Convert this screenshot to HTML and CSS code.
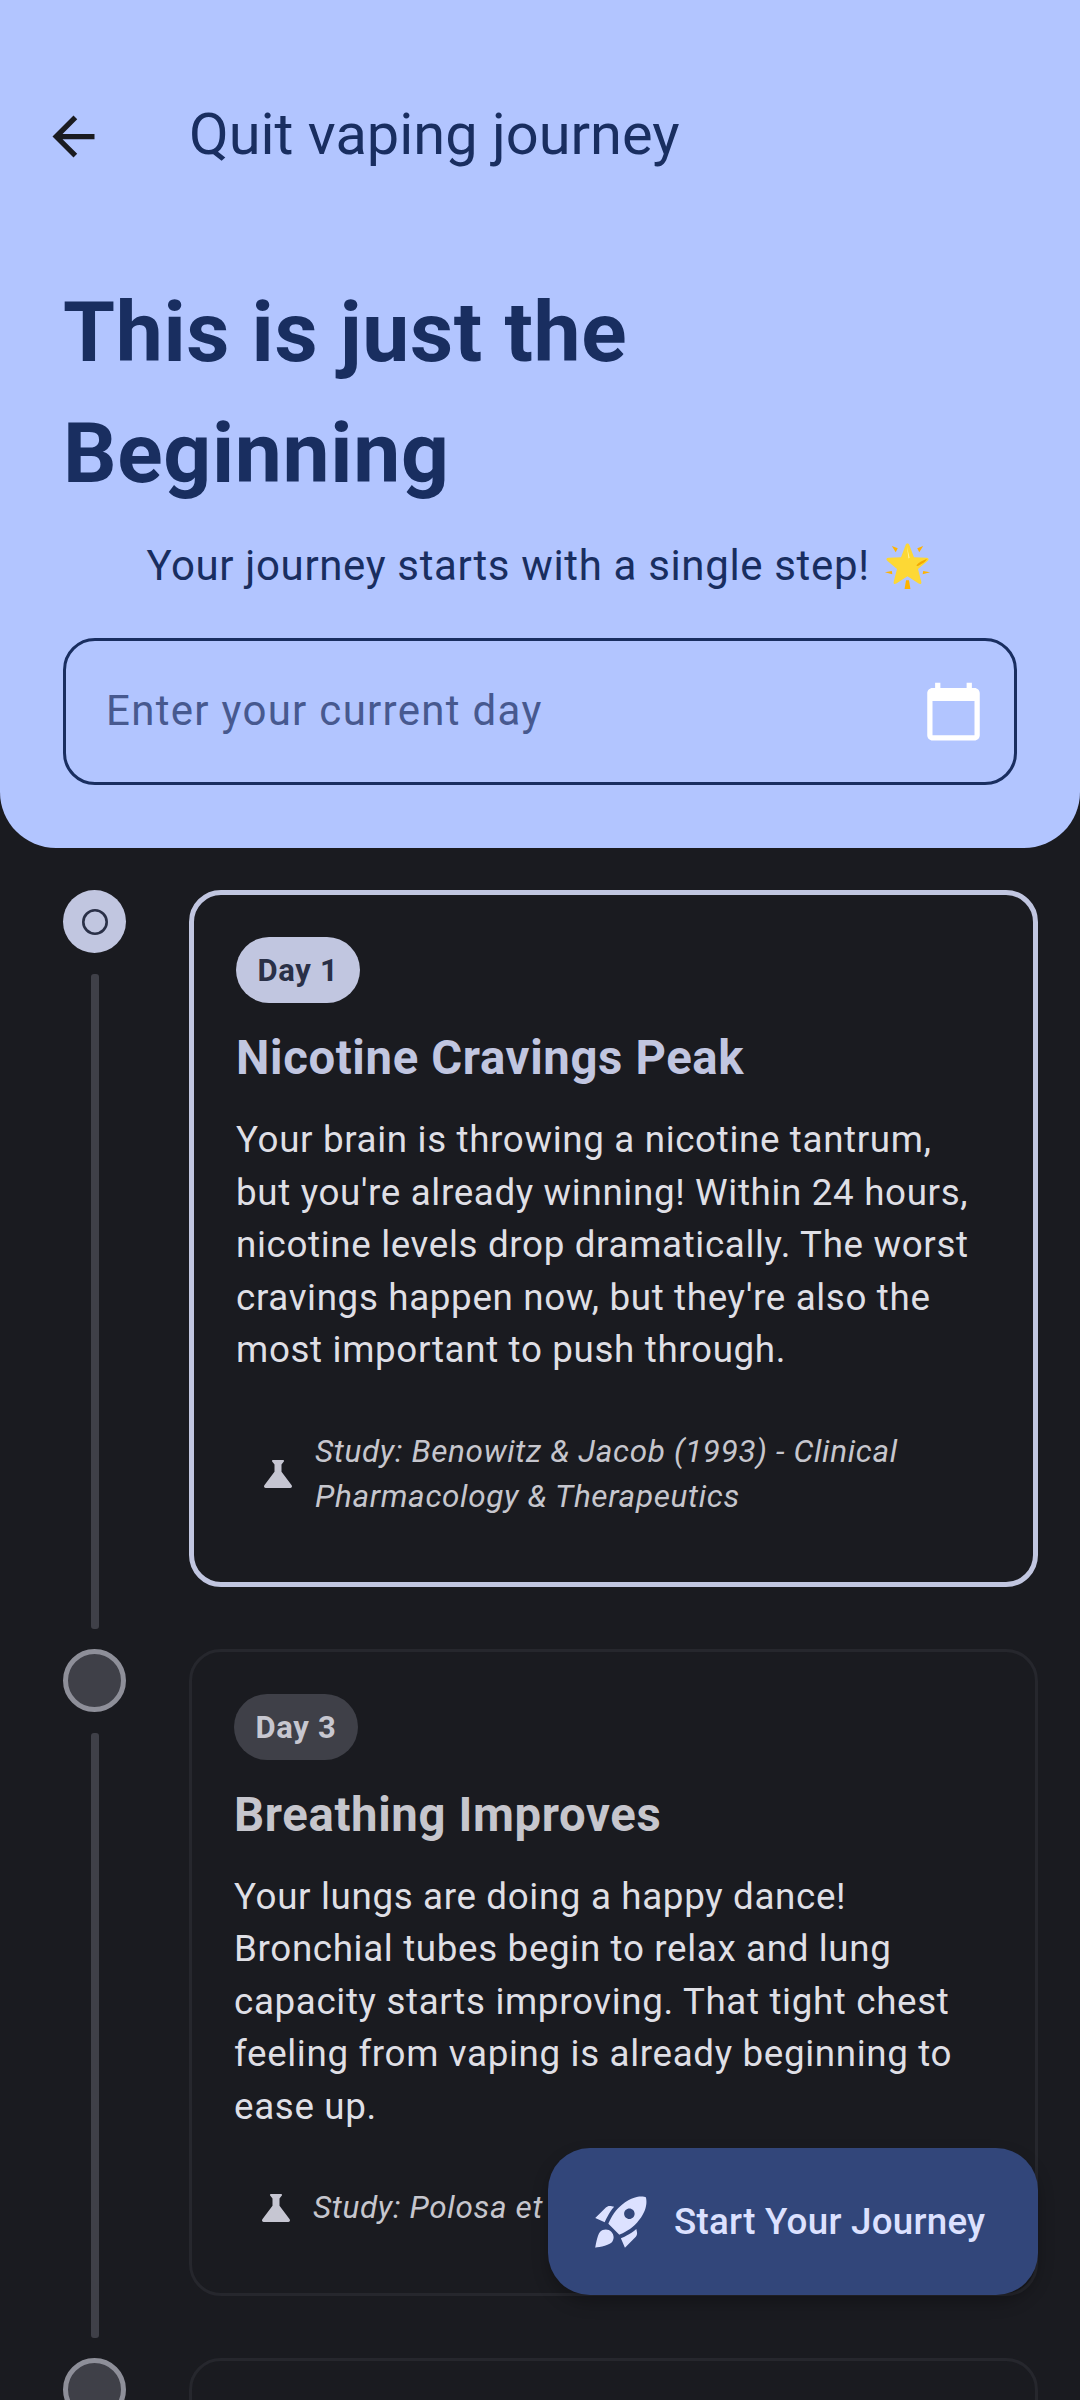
FILE: index.html
```html
<!DOCTYPE html>
<html lang="en">
<head>
    <meta charset="UTF-8">
    <title>Quit vaping journey</title>
    <link rel="stylesheet" href="styles.css">
</head>
<body>
<div id="screen">
    <header id="hero">
        <div id="appbar">
            <svg class="back" viewBox="0 0 24 24"><path d="M20 11H7.830l5.590-5.590L12 4l-8 8 8 8 1.410-1.410L7.830 13H20v-2z"/></svg>
            <span class="appbar-title">Quit vaping journey</span>
        </div>
        <h1>This is just the Beginning</h1>
        <p class="subtitle">Your journey starts with a single step!
            <svg class="star" viewBox="0 0 48 48">
                <path d="M24 1.500c1 0 1.600.7 2 1.800l4.600 12.200 12.700.7c2.300.1 3 1.600 1.400 3l-10 8.300 3.400 13c.5 2-.9 3-2.700 1.900L24 35l-11.400 7.400c-1.800 1.100-3.200.1-2.700-1.900l3.400-13-10-8.300c-1.600-1.400-.9-2.900 1.400-3l12.700-.7L22 3.300c.4-1.100 1-1.800 2-1.800z" fill="#fdd835"/>
                <path d="M23.500 5l2.500 10.500-1 1.500z" fill="#fff59d"/>
                <path d="M33 24c2-3 6-5 11-7-1 2-3 4-6 5.500-2 1.500-3.500 2.500-5 1.500z" fill="#f4a800"/>
                <path d="M8 4l6 2.500-2 4zM40 4l-6 2.500 2 4zM1 31l7-1.500.5 3.500zM47 31l-7-1.500-.5 3.500zM22.500 39h3l1.500 9h-6z" fill="#ffb300"/>
            </svg>
        </p>
        <div id="dayInput">
            <span class="placeholder">Enter your current day</span>
            <svg class="calendar" viewBox="0 0 24 24"><path d="M20 3h-1V1h-2v2H7V1H5v2H4c-1.100 0-2 .9-2 2v16c0 1.100.9 2 2 2h16c1.100 0 2-.9 2-2V5c0-1.100-.9-2-2-2zm0 18H4V8h16v13z"/></svg>
        </div>
    </header>

    <main id="timeline">
        <div class="step current">
            <div class="rail">
                <div class="node">
                    <svg class="node-ring" viewBox="0 0 26 26"><circle cx="13" cy="13" r="11.700"/></svg>
                </div>
                <div class="line"></div>
            </div>
            <article class="card">
                <span class="pill">Day 1</span>
                <h2>Nicotine Cravings Peak</h2>
                <p class="body">Your brain is throwing a nicotine tantrum, but you're already winning! Within 24 hours, nicotine levels drop dramatically. The worst cravings happen now, but they're also the most important to push through.</p>
                <div class="study">
                    <svg class="flask" viewBox="0 0 24 24"><path d="M19.800 18.400L14 10.670V6.500l1.350-1.690c.26-.33.03-.81-.39-.81H9.040c-.42 0-.65.48-.39.81L10 6.500v4.170L4.200 18.400c-.49.66-.02 1.600.8 1.600h14c.82 0 1.290-.94.8-1.600z"/></svg>
                    <span>Study: Benowitz &amp; Jacob (1993) - Clinical Pharmacology &amp; Therapeutics</span>
                </div>
            </article>
        </div>

        <div class="step">
            <div class="rail">
                <div class="node"></div>
                <div class="line"></div>
            </div>
            <article class="card">
                <span class="pill">Day 3</span>
                <h2>Breathing Improves</h2>
                <p class="body">Your lungs are doing a happy dance! Bronchial tubes begin to relax and lung capacity starts improving. That tight chest feeling from vaping is already beginning to ease up.</p>
                <div class="study">
                    <svg class="flask" viewBox="0 0 24 24"><path d="M19.800 18.400L14 10.670V6.500l1.350-1.690c.26-.33.03-.81-.39-.81H9.040c-.42 0-.65.48-.39.81L10 6.500v4.170L4.200 18.400c-.49.66-.02 1.600.8 1.600h14c.82 0 1.290-.94.8-1.600z"/></svg>
                    <span>Study: Polosa et al. (2015)</span>
                </div>
            </article>
        </div>

        <div class="step">
            <div class="rail">
                <div class="node"></div>
            </div>
            <article class="card"></article>
        </div>
    </main>

    <button id="startBtn">
        <svg class="rocket" viewBox="0 0 24 24"><path d="M9.190 6.350c-2.040 2.290-3.440 5.580-3.570 5.890L2 10.690l4.050-4.050c.47-.47 1.150-.68 1.810-.55l1.330.26zM11.170 17s3.740-1.550 5.890-3.700c5.400-5.400 4.500-9.620 4.210-10.570-.95-.3-5.170-1.190-10.570 4.210C8.550 9.090 7 12.830 7 12.830L11.170 17zm6.480-2.190c-2.290 2.040-5.580 3.440-5.890 3.570L13.310 22l4.050-4.050c.47-.47.68-1.150.55-1.810l-.26-1.330zM9 18c0 .83-.34 1.580-.88 2.120C6.940 21.300 2 22 2 22s.7-4.940 1.880-6.120C4.420 15.340 5.170 15 6 15c1.660 0 3 1.340 3 3zm4-9c0-1.100.9-2 2-2s2 .9 2 2-.9 2-2 2-2-.9-2-2z"/></svg>
        <span>Start Your Journey</span>
    </button>
</div>
</body>
</html>
```

FILE: styles.css
```css
* {
    padding: 0;
    margin: 0;
    box-sizing: border-box;
}

body {
    background: #1a1b20;
    font-family: Roboto, "Noto Sans", sans-serif;
}

#screen {
    width: 1080px;
    height: 2400px;
    position: relative;
    overflow: hidden;
    background: #1a1b20;
}

/* top blue part */
#hero {
    height: 848px;
    padding: 63px 63px 0;
    background: #b2c5ff;
    border-radius: 0 0 56px 56px;
    color: #192e60;
}

#appbar {
    height: 147px;
    margin-left: -21px;
    display: flex;
    align-items: center;
    gap: 84px;
}

.back {
    width: 63px;
    height: 63px;
    fill: #1a1b20;
    flex: none;
}

.appbar-title {
    padding-bottom: 5px;
    font-size: 57.750px;
    font-weight: 400;
}

h1 {
    width: 640px;
    margin-top: 62px;
    font-size: 84px;
    line-height: 121px;
    font-weight: 700;
    letter-spacing: 0.65px;
}

.subtitle {
    margin-top: 24px;
    height: 55px;
    padding-right: 3px;
    display: flex;
    align-items: center;
    justify-content: center;
    gap: 14px;
    font-size: 42px;
    letter-spacing: 0.65px;
    white-space: nowrap;
}

.star {
    width: 47px;
    height: 47px;
    flex: none;
}

#dayInput {
    height: 147px;
    margin-top: 45px;
    padding: 0 29px 0 40px;
    display: flex;
    align-items: center;
    justify-content: space-between;
    border: 3px solid #192e60;
    border-radius: 32px;
}

.placeholder {
    padding-bottom: 2px;
    font-size: 42px;
    letter-spacing: 1.3px;
    color: #47598f;
}

.calendar {
    width: 63px;
    height: 63px;
    fill: #fff;
    flex: none;
}

/* timeline */
#timeline {
    padding: 42px 42px 0 63px;
    display: flex;
    flex-direction: column;
    gap: 62px;
}

.step {
    display: flex;
    gap: 63px;
}

.rail {
    width: 63px;
    flex: none;
    display: flex;
    flex-direction: column;
    align-items: center;
}

.node {
    width: 63px;
    height: 63px;
    flex: none;
    display: flex;
    align-items: center;
    justify-content: center;
    border: 5px solid #8e8f99;
    border-radius: 50%;
    background: #3f4048;
}

.current .node {
    border: 0;
    background: #c1c6e0;
}

.node-ring {
    width: 26px;
    height: 26px;
    fill: none;
    stroke: #2a3047;
    stroke-width: 2.6;
}

.line {
    width: 8px;
    flex: 1;
    margin: 21px 0 -42px;
    border-radius: 3px;
    background: #3f4048;
}

.card {
    flex: 1;
    min-width: 0;
    padding: 42px;
    border: 3px solid #26272d;
    border-radius: 32px;
    color: #e3e3e9;
}

.current .card {
    border: 5px solid #c1c6e0;
}

.pill {
    display: inline-block;
    height: 66px;
    padding: 0 21.500px;
    border-radius: 33px;
    background: #3f4048;
    color: #c7c7d0;
    font-size: 31px;
    line-height: 67px;
    font-weight: 700;
    letter-spacing: 0.65px;
}

.current .pill {
    background: #c1c6e0;
    color: #2a3047;
}

h2 {
    margin-top: 24px;
    font-size: 47.250px;
    line-height: 63px;
    font-weight: 700;
    letter-spacing: 0.65px;
    color: #c6c6cd;
}

.current h2 {
    color: #c1c6e0;
}

.body {
    margin-top: 24px;
    font-size: 36.750px;
    line-height: 52.500px;
    letter-spacing: 0.65px;
    color: #dfdfe5;
}

.study {
    margin-top: 31px;
    padding: 21px;
    display: flex;
    align-items: center;
    gap: 16px;
    font-size: 31.500px;
    line-height: 45px;
    font-style: italic;
    letter-spacing: 0.65px;
    color: #c6c6cd;
}

.flask {
    width: 42px;
    height: 42px;
    fill: #c6c6d2;
    flex: none;
}

/* floating button */
#startBtn {
    position: absolute;
    left: 548px;
    top: 2148px;
    width: 490px;
    height: 147px;
    padding: 0 42px;
    display: flex;
    align-items: center;
    gap: 21px;
    border: 0;
    border-radius: 42px;
    background: #32467a;
    color: #dce1ff;
    font-family: Roboto, "Noto Sans", sans-serif;
    font-size: 36.750px;
    font-weight: 500;
    letter-spacing: 0.25px;
    box-shadow: 0 8px 16px rgba(0, 0, 0, 0.25);
}

.rocket {
    width: 63px;
    height: 63px;
    fill: #dce1ff;
    flex: none;
}
```
